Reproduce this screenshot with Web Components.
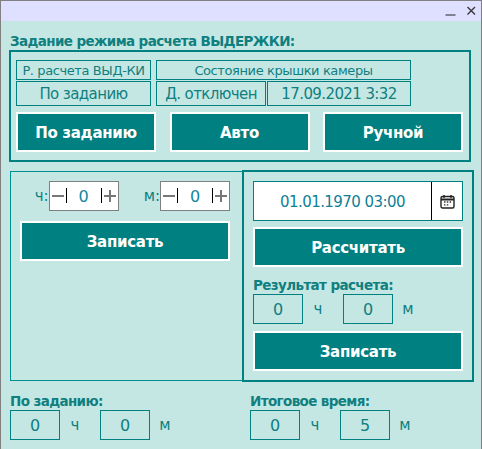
<!DOCTYPE html>
<html lang="ru">
<head>
<meta charset="utf-8">
<title>Выдержка</title>
<style>
    html, body { margin: 0; padding: 0; background: #c5e7e4; }
    body { font-family: "DejaVu Sans", Tahoma, sans-serif; color: #008080; }
</style>
</head>
<body>
<delay-window>
    <title-bar slot="title"></title-bar>

    <section-label>Задание режима расчета ВЫДЕРЖКИ:</section-label>
    <mode-panel>
        <info-cell slot="a" size="s">Р. расчета ВЫД-КИ</info-cell>
        <info-cell slot="b" size="s">Состояние крышки камеры</info-cell>
        <info-cell slot="c">По заданию</info-cell>
        <info-cell slot="d">Д. отключен</info-cell>
        <info-cell slot="e">17.09.2021 3:32</info-cell>
        <teal-button slot="btn">По заданию</teal-button>
        <teal-button slot="btn">Авто</teal-button>
        <teal-button slot="btn">Ручной</teal-button>
    </mode-panel>

    <two-columns>
        <div slot="left">
            <stepper-row>
                <num-stepper label="ч:" value="0"></num-stepper>
                <num-stepper label="м:" value="0"></num-stepper>
            </stepper-row>
            <teal-button wide>Записать</teal-button>
        </div>
        <div slot="right">
            <date-field value="01.01.1970 03:00"></date-field>
            <teal-button wide>Рассчитать</teal-button>
            <section-label tight style="margin: 4px 0 -6px">Результат расчета:</section-label>
            <time-values h="0" m="0" style="margin-bottom: 1px"></time-values>
            <teal-button wide>Записать</teal-button>
        </div>
    </two-columns>

    <footer-row>
        <div slot="left">
            <section-label tight>По заданию:</section-label>
            <time-values h="0" m="0"></time-values>
        </div>
        <div slot="right">
            <section-label tight>Итоговое время:</section-label>
            <time-values h="0" m="5"></time-values>
        </div>
    </footer-row>
</delay-window>

<script>
// SMALL HELPER: DEFINE AN ELEMENT FROM A STYLE + MARKUP STRING
function defineEl(name, html, init) {
    customElements.define(name, class extends HTMLElement {
        constructor() {
            super();
            this.attachShadow({ mode: 'open' });
            this.shadowRoot.innerHTML = html;
        }
        connectedCallback() {
            if (init) init(this, this.shadowRoot);
        }
    });
}

// WINDOW FRAME
defineEl('delay-window', `
    <style>
        :host { display: block; width: 482px; height: 449px; box-sizing: border-box; background: #c5e7e4;
                border: 1px solid #808080; border-bottom: 0; overflow: hidden; }
        .content { display: flex; flex-direction: column; }
    </style>
    <slot name="title"></slot>
    <div class="content"><slot></slot></div>
`);

// TITLE BAR WITH MINIMIZE + CLOSE
defineEl('title-bar', `
    <style>
        :host { display: flex; justify-content: flex-end; align-items: center; height: 20px; background: #dfdfff; }
        svg { display: block; }
    </style>
    <svg width="40" height="20" viewBox="0 0 40 20">
        <path d="M4.500 14h10" stroke="#222" stroke-width="1" fill="none"/>
        <path d="M26.500 6l7.500 7.500m0-7.500l-7.500 7.500" stroke="#333" stroke-width="1.300" fill="none"/>
    </svg>
`);

// BOLD TEAL HEADING
defineEl('section-label', `
    <style>
        :host { display: block; font: bold 13.500px "DejaVu Sans", sans-serif; color: #0f7f7f; height: 29px;
                line-height: 16px; padding: 12px 0 0 9px; box-sizing: border-box; white-space: nowrap; letter-spacing: -0.620px; }
        :host([tight]) { padding: 0; height: 17px; }
    </style>
    <slot></slot>
`);

// TOP PANEL WITH STATUS CELLS + MODE BUTTONS
defineEl('mode-panel', `
    <style>
        :host { display: block; width: 462px; height: 112px; margin-left: 8px; box-sizing: border-box;
                border: 2px solid #008080; padding: 8px 6px 0 5px; }
        .cells { display: grid; grid-template-columns: 135px 5px 110px 1px 144px; grid-template-rows: 20px 25px; row-gap: 1px; }
        ::slotted([slot="a"]) { grid-area: 1 / 1; }
        ::slotted([slot="b"]) { grid-area: 1 / 3 / 2 / 6; }
        ::slotted([slot="c"]) { grid-area: 2 / 1; }
        ::slotted([slot="d"]) { grid-area: 2 / 3; }
        ::slotted([slot="e"]) { grid-area: 2 / 5; }
        .btns { display: flex; justify-content: space-between; margin-top: 6px; }
    </style>
    <div class="cells">
        <slot name="a"></slot><slot name="b"></slot>
        <slot name="c"></slot><slot name="d"></slot><slot name="e"></slot>
    </div>
    <div class="btns"><slot name="btn"></slot></div>
`);

// BORDERED STATUS CELL
defineEl('info-cell', `
    <style>
        :host { display: flex; align-items: center; justify-content: center; box-sizing: border-box; min-width: 0;
                border: 1px solid #008080; color: #0f7f7f; font: 15px "DejaVu Sans", sans-serif; white-space: nowrap; letter-spacing: -0.600px; }
        :host([size="s"]) { font-size: 13px; letter-spacing: -0.400px; }
    </style>
    <slot></slot>
`);

// TEAL ACTION BUTTON
defineEl('teal-button', `
    <style>
        :host { display: flex; align-items: center; justify-content: center; box-sizing: border-box;
                width: 140px; height: 40px; padding-top: 1px; background: #008080; border: 2px solid #fff; color: #fff;
                font: bold 15px "DejaVu Sans", sans-serif; letter-spacing: -0.300px; white-space: nowrap; }
        :host([wide]) { width: 210px; }
    </style>
    <slot></slot>
`);

// MIDDLE AREA: THIN LEFT BOX + THICK RIGHT BOX
defineEl('two-columns', `
    <style>
        :host { display: grid; grid-template-columns: 232px 232px; width: 464px; height: 212px; margin: 8px 0 0 9px; }
        .l { box-sizing: border-box; margin: 1px 0; border: 1px solid #009090; border-right: 0; padding: 9px 0 0 9px; }
        .r { box-sizing: border-box; border: 2px solid #008080; padding: 9px 9px 0 9px; }
        ::slotted(div) { display: flex; flex-direction: column; }
        .r ::slotted(div) { gap: 6px; }
    </style>
    <div class="l"><slot name="left"></slot></div>
    <div class="r"><slot name="right"></slot></div>
`);

// ROW OF STEPPERS
defineEl('stepper-row', `
    <style>
        :host { display: flex; justify-content: flex-end; gap: 25px; margin-bottom: 10px; padding-right: 12px; }
    </style>
    <slot></slot>
`);

// NUMBER STEPPER WITH LABEL
defineEl('num-stepper', `
    <style>
        :host { display: flex; align-items: center; color: #0f7f7f; font: 15px "DejaVu Sans", sans-serif; }
        .box { display: grid; grid-template-columns: 18px 1fr 18px; align-items: center; width: 70px; height: 30px;
               box-sizing: border-box; border: 1px solid #808080; background: #fff; }
        .val { text-align: center; font-size: 16px; color: #1287a0; padding-top: 1px; }
        svg { display: block; }
    </style>
    <span id="label"></span>
    <div class="box">
        <svg width="18" height="28" viewBox="0 0 18 28"><path d="M2 14h12" stroke="#777" stroke-width="2"/><path d="M16.500 6v15" stroke="#000"/></svg>
        <span class="val" id="val"></span>
        <svg width="18" height="28" viewBox="0 0 18 28"><path d="M1.500 6v15" stroke="#000"/><path d="M4 14h12M10 8v12" stroke="#777" stroke-width="2"/></svg>
    </div>
`, (el, root) => {
    root.getElementById('label').textContent = el.getAttribute('label');
    root.getElementById('val').textContent = el.getAttribute('value');
});

// DATE INPUT WITH CALENDAR BUTTON
defineEl('date-field', `
    <style>
        :host { display: flex; width: 210px; height: 40px; box-sizing: border-box; border: 1px solid #008080; background: #fff; }
        .text { flex: 1; display: flex; align-items: center; justify-content: center; padding-top: 1px; font: 15px "DejaVu Sans", sans-serif;
                color: #0f7f95; letter-spacing: -0.550px; border-right: 1px solid #000; }
        .cal { width: 30px; display: flex; align-items: center; justify-content: center; }
        svg { display: block; }
    </style>
    <div class="text" id="text"></div>
    <div class="cal">
        <svg width="15" height="15" viewBox="0 0 15 15">
            <rect x="1" y="2.500" width="13" height="11.500" rx="1.500" fill="none" stroke="#222" stroke-width="1.400"/>
            <path d="M1 5.500h13" stroke="#222" stroke-width="2"/>
            <path d="M4 1v3M11 1v3" stroke="#222" stroke-width="1.400"/>
            <path d="M4 8h1.500M6.800 8h1.500M9.600 8h1.500M4 10.800h1.500M6.800 10.800h1.500" stroke="#333" stroke-width="1.300"/>
        </svg>
    </div>
`, (el, root) => {
    root.getElementById('text').textContent = el.getAttribute('value');
});

// HOURS + MINUTES VALUE BOXES
defineEl('time-values', `
    <style>
        :host { display: grid; grid-template-columns: 50px 40px 50px 30px; align-items: center; height: 30px;
                font: 15px "DejaVu Sans", sans-serif; color: #0f7f7f; }
        .v { height: 30px; box-sizing: border-box; border: 1px solid #008080; display: flex; align-items: center; justify-content: center; font-size: 16px; }
        .u { text-align: center; padding-right: 10px; }
    </style>
    <div class="v" id="h"></div><div class="u">ч</div>
    <div class="v" id="m"></div><div class="u" style="padding:0">м</div>
`, (el, root) => {
    root.getElementById('h').textContent = el.getAttribute('h');
    root.getElementById('m').textContent = el.getAttribute('m');
});

// BOTTOM SUMMARY ROW
defineEl('footer-row', `
    <style>
        :host { display: grid; grid-template-columns: 240px 1fr; padding: 11px 0 0 9px; }
    </style>
    <slot name="left"></slot>
    <slot name="right"></slot>
`);
</script>
</body>
</html>
